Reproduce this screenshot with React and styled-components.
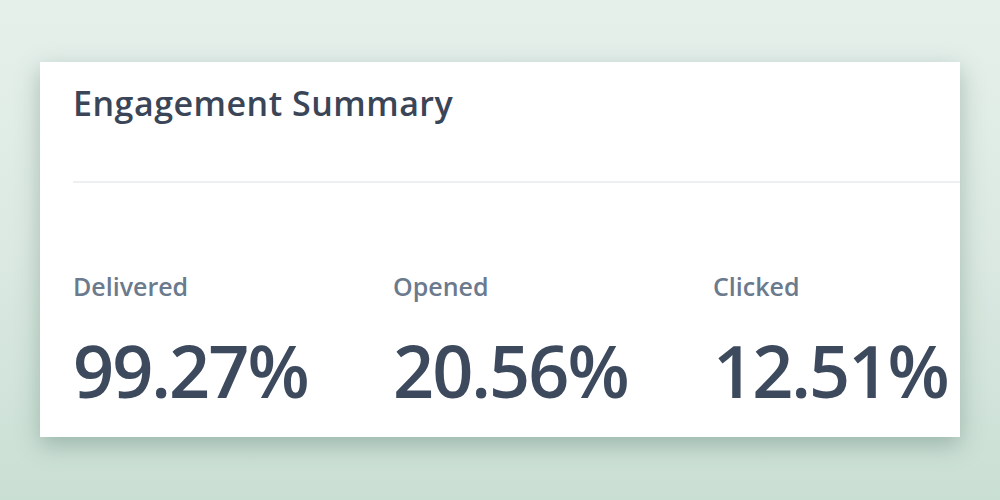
import styled, { createGlobalStyle } from "styled-components";

const GlobalStyle = createGlobalStyle`
  html, body {
    margin: 0;
    padding: 0;
  }
  body {
    font-family: "Open Sans", "Noto Sans", sans-serif;
  }
`;

const stats = [
  { label: "Delivered", value: "99.27%" },
  { label: "Opened", value: "20.56%" },
  { label: "Clicked", value: "12.51%" },
];

export default function App() {
  return (
    <>
      <GlobalStyle />
      <Page>
        <Card>
          <Header>
            <Title>Engagement Summary</Title>
          </Header>
          <Divider />
          <StatsRow>
            {stats.map((s) => (
              <Stat key={s.label}>
                <StatLabel>{s.label}</StatLabel>
                <StatValue>{s.value}</StatValue>
              </Stat>
            ))}
          </StatsRow>
        </Card>
      </Page>
    </>
  );
}

const Page = styled.div`
  width: 1000px;
  height: 500px;
  box-sizing: border-box;
  padding: 62px 40px 0;
  background: linear-gradient(180deg, #e6f0eb 0%, #dbe9e2 50%, #cadfd4 100%);
  overflow: hidden;
`;

const Card = styled.div`
  width: 920px;
  height: 375px;
  box-sizing: border-box;
  padding-left: 33px;
  background-color: #ffffff;
  box-shadow: 0 8px 22px rgba(70, 110, 95, 0.38);
  display: flex;
  flex-direction: column;
`;

const Header = styled.div`
  padding-top: 18px;
  height: 119px;
  box-sizing: border-box;
`;

const Title = styled.h2`
  margin: 0;
  font-size: 34px;
  line-height: 46px;
  font-weight: 600;
  color: #3a4557;
  letter-spacing: 0.5px;
`;

const Divider = styled.div`
  height: 2px;
  background-color: #eeeff1;
`;

const StatsRow = styled.div`
  display: grid;
  grid-template-columns: repeat(3, 320px);
  padding-top: 86px;
`;

const Stat = styled.div`
  display: flex;
  flex-direction: column;
`;

const StatLabel = styled.div`
  font-size: 25px;
  line-height: 34px;
  font-weight: 600;
  color: #6b7a8d;
`;

const StatValue = styled.div`
  margin-top: 24px;
  font-size: 72px;
  line-height: 86px;
  font-weight: 600;
  color: #3d4a5e;
  letter-spacing: -2px;
`;
